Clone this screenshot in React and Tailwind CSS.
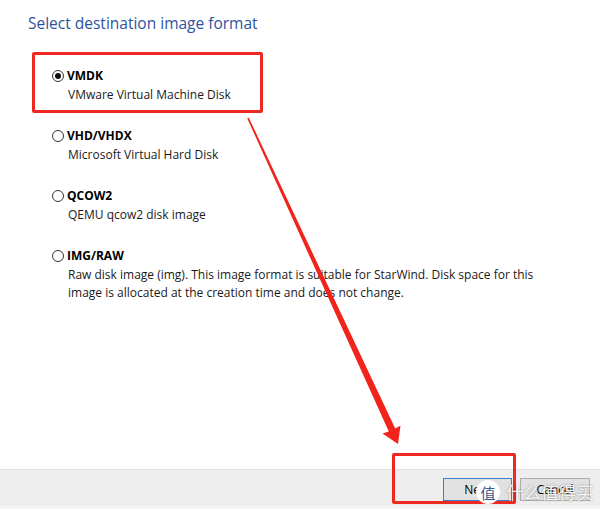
import React from 'react';

const formats = [
  { id: 'vmdk', name: 'VMDK', desc: ['VMware Virtual Machine Disk'], checked: true },
  { id: 'vhd', name: 'VHD/VHDX', desc: ['Microsoft Virtual Hard Disk'] },
  { id: 'qcow', name: 'QCOW2', desc: ['QEMU qcow2 disk image'] },
  {
    id: 'img',
    name: 'IMG/RAW',
    desc: [
      'Raw disk image (img). This image format is suitable for StarWind. Disk space for this',
      'image is allocated at the creation time and does not change.',
    ],
  },
];

function Radio({ checked }) {
  return (
    <span className="w-[12px] h-[12px] rounded-full border border-[#333333] bg-white flex items-center justify-center shrink-0">
      {checked && <span className="w-[6px] h-[6px] rounded-full bg-[#111111]" />}
    </span>
  );
}

export default function App() {
  return (
    <div className="relative w-[600px] h-[509px] bg-white overflow-hidden font-['Open_Sans',sans-serif] text-[#1a1a1a]">
      <div className="h-[469px] pl-[28px] pt-[12px]">
        <h1 className="text-[15.5px] leading-[22px] text-[#2d52a0]">Select destination image format</h1>

        <div className="mt-[32px] ml-[24px] flex flex-col gap-[22px]">
          {formats.map(f => (
            <div key={f.id}>
              <div className="flex items-center gap-[3px] h-[20px]">
                <Radio checked={f.checked} />
                <span className="text-[12px] font-bold leading-[20px] text-black">{f.name}</span>
              </div>
              <div className="pl-[16px] text-[12px] leading-[18px]">
                {f.desc.map(line => <p key={line}>{line}</p>)}
              </div>
            </div>
          ))}
        </div>
      </div>

      <div className="h-[37px] border-t border-[#e2e2e2] bg-[#eeeeee] flex justify-end items-start pt-[8px] pr-[10px] gap-[8px]">
        <button className="w-[69px] h-[23px] border border-[#3c7fd1] bg-[#e1e1e1] text-[12px] leading-[20px] text-black">Next</button>
        <button className="w-[70px] h-[23px] border border-[#adadad] bg-[#e1e1e1] text-[12px] leading-[20px] text-black">Cancel</button>
      </div>
      <div className="h-[3px] bg-[#f6f6f6]" />

      {/* annotation boxes */}
      <div className="absolute left-[32px] top-[52px] w-[231px] h-[61px] border-[3px] border-[#ec2a22] rounded-[2px]" />
      <div className="absolute left-[392px] top-[453px] w-[124px] h-[51px] border-[3px] border-[#ec2a22] rounded-[2px]" />

      {/* arrow */}
      <svg className="absolute left-0 top-0 pointer-events-none" width="600" height="509" viewBox="0 0 600 509">
        <polygon
          fill="#f2231b"
          points="247.2,118.3 248.8,117.7 395.2,428.4 400.5,425.5 398,444 382.5,433.5 388.8,431.6"
        />
      </svg>

      {/* watermark */}
      <div className="absolute left-[476px] top-[480px] w-[24px] h-[24px] rounded-full bg-white flex items-center justify-center text-[15px] leading-none text-[#3a5a8a] font-['Noto_Sans_CJK_SC',sans-serif]">
        值
      </div>
      <div className="absolute left-[506px] top-[481px] text-[17.5px] leading-[22px] text-white/90 font-['Noto_Sans_CJK_SC',sans-serif] [text-shadow:0_0_2px_rgba(0,0,0,0.45)]">
        什么值得买
      </div>
    </div>
  );
}
